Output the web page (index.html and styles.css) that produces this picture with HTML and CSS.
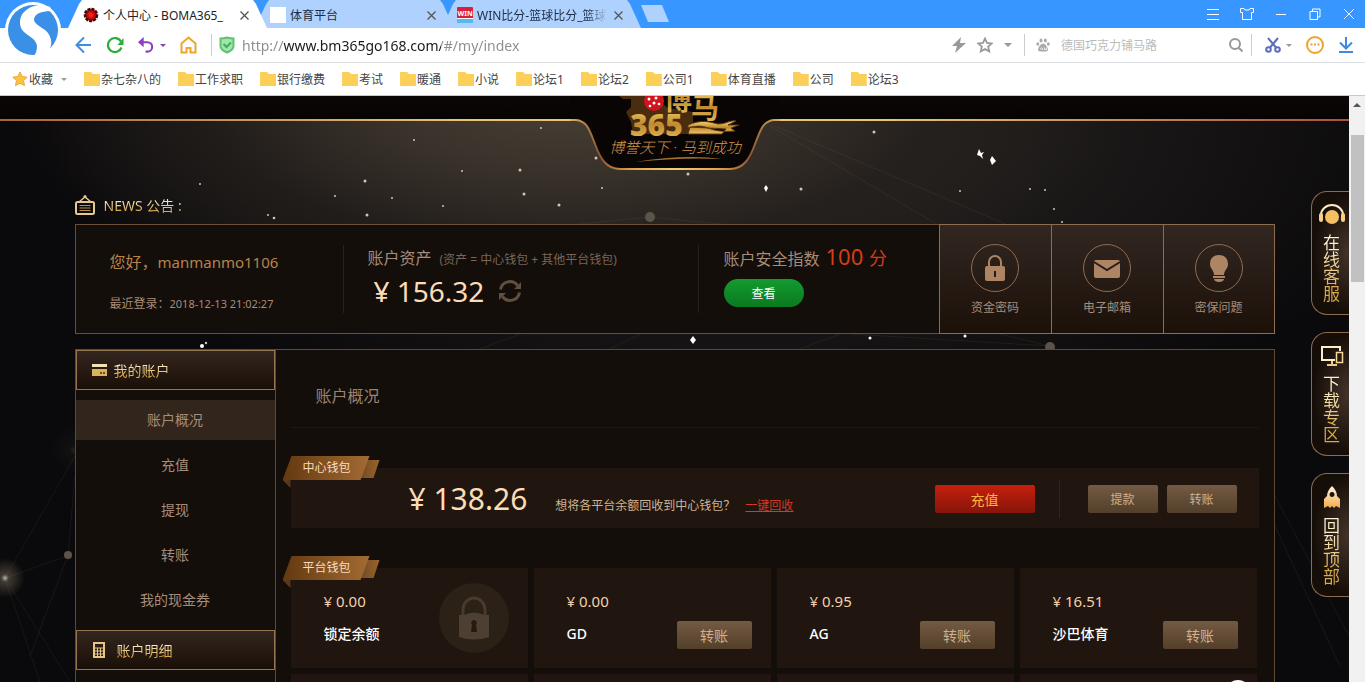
FILE: index.html
```
<!DOCTYPE html>
<html lang="zh-CN">
<head>
  <meta charset="UTF-8">
  <title>个人中心 - BOMA365</title>
  <link rel="stylesheet" href="styles.css">
</head>
<body>

<header class="browser">
  <svg class="browser-logo" width="60" height="58" viewBox="3 0 60 58">
    <circle cx="33" cy="30" r="28" fill="#fff"/>
    <circle cx="33" cy="30" r="25" fill="#3a8fe6"/>
    <path d="M50 7C38 2 21 8 20 21C19 36 36 35 37 46C37 50 36 53 34 56L46 54C50 51 52 45 51 40C49 27 34 27 34 19C35 13 43 11 52 11Z" fill="#fff"/>
  </svg>

  <div class="tabs">
    <div class="tab active">
      <svg width="16" height="16" viewBox="0 0 16 16"><circle cx="8" cy="8" r="6" fill="#c00808" stroke="#3a0a08" stroke-width="2.500" stroke-dasharray="3 1"/><path d="M5 6l3-1 3 3-2 3-3-1z" fill="#f02020"/></svg>
      <span>个人中心 - BOMA365_</span>
      <button class="close" aria-label="关闭"><svg width="9" height="9" viewBox="0 0 9 9"><path d="M.5.500l8 8M8.500.500l-8 8"/></svg></button>
    </div>
    <div class="tab">
      <svg width="16" height="16" viewBox="0 0 16 16"><path d="M0 0h16v16H0z" fill="#fff"/></svg>
      <span>体育平台</span>
      <button class="close" aria-label="关闭"><svg width="9" height="9" viewBox="0 0 9 9"><path d="M.5.500l8 8M8.500.500l-8 8"/></svg></button>
    </div>
    <div class="tab">
      <svg width="16" height="16" viewBox="0 0 16 16"><rect width="16" height="16" rx="1" fill="#d8203c"/><path d="M0 12h16v4H0z" fill="#58b8f0"/><path d="M0 11h16v1H0z" fill="#fff"/><text x="8" y="9" text-anchor="middle" class="win">WIN</text></svg>
      <span class="faded">WIN比分-篮球比分_篮球</span>
      <button class="close" aria-label="关闭"><svg width="9" height="9" viewBox="0 0 9 9"><path d="M.5.500l8 8M8.500.500l-8 8"/></svg></button>
    </div>
    <button class="new-tab" aria-label="新标签"></button>
    <div class="window-buttons">
      <button aria-label="菜单"><svg width="14" height="14" viewBox="0 0 14 14"><path d="M1 2.500h12M1 7.500h12M1 12.500h12"/></svg></button>
      <button aria-label="皮肤"><svg width="14" height="14" viewBox="0 0 14 14"><path d="M.5 1.500h3.500l1 1.500h4l1-1.500h3.500v4h-2v7h-9v-7h-2z"/></svg></button>
      <button aria-label="最小化"><svg width="14" height="14" viewBox="0 0 14 14"><path d="M2 7.500h10"/></svg></button>
      <button aria-label="还原"><svg width="14" height="14" viewBox="0 0 14 14"><path d="M2 4.500h7.500v8H2zM4.500 4.500v-2.500h7.500v8h-2.500"/></svg></button>
      <button aria-label="关闭窗口"><svg width="14" height="14" viewBox="0 0 14 14"><path d="M2 2l10 10M12 2l-10 10"/></svg></button>
    </div>
  </div>

  <div class="toolbar">
    <nav class="nav">
      <button aria-label="后退"><svg width="17" height="18" viewBox="0 0 17 18"><path d="M16 9H2M9 1.500L1.500 9L9 16.500" fill="none" stroke="#3f8ee0" stroke-width="2"/></svg></button>
      <button aria-label="刷新"><svg width="18" height="18" viewBox="0 0 18 18"><path d="M15.500 11.500A7 7 0 1 1 15 5.500" fill="none" stroke="#2bad3c" stroke-width="2.200"/><path d="M17.500 2v7h-6z" fill="#2bad3c"/></svg></button>
      <span class="undo">
        <button aria-label="撤销"><svg width="17" height="18" viewBox="0 0 18 18"><path d="M3 6h7a5 5 0 0 1 0 10H8" fill="none" stroke="#8a3fc4" stroke-width="2.200"/><path d="M0 6l6-5.500v11z" fill="#8a3fc4"/></svg></button>
        <i class="caret violet"></i>
      </span>
      <button aria-label="主页"><svg width="17" height="18" viewBox="0 0 17 18"><path d="M1.500 16.500V7.500L8.500 1.500L15.500 7.500v9h-5v-4.500h-4v4.500z" fill="none" stroke="#eda62a" stroke-width="2"/></svg></button>
    </nav>
    <i class="sep"></i>
    <svg class="shield" width="16" height="18" viewBox="0 0 16 18"><path d="M1.500 2.500Q5 2.500 8 1.500Q11 2.500 14.500 2.500V10Q14.500 14 8 16.500Q1.500 14 1.500 10z" fill="#a5e3b0" stroke="#5cc46e" stroke-width="2"/><path d="M4.500 8l3 3 4.500-4.500" fill="none" stroke="#3fae55" stroke-width="2"/></svg>
    <input class="url" type="text" aria-label="地址" value="http://www.bm365go168.com/#/my/index">
    <div class="url-tools">
      <svg width="14" height="16" viewBox="0 0 14 16"><path d="M9 0L0 9h5l-2 7 11-10H8z" fill="#999"/></svg>
      <svg width="16" height="16" viewBox="0 0 16 16"><path d="M8 1.500l2 4.400 4.700.5-3.500 3.200 1 4.800L8 12l-4.200 2.400 1-4.800L1.300 6.400 6 5.900z" fill="none" stroke="#999" stroke-width="1.800"/></svg>
      <i class="caret"></i>
    </div>
    <div class="search">
      <svg width="14" height="14" viewBox="0 0 14 14" fill="#aaa"><ellipse cx="5" cy="2.500" rx="1.500" ry="2"/><ellipse cx="9.300" cy="2.500" rx="1.500" ry="2"/><ellipse cx="1.800" cy="6" rx="1.500" ry="1.800"/><ellipse cx="12.300" cy="6" rx="1.500" ry="1.800"/><path d="M7 5.500c2 0 5 4 5 6s-2 2-5 2-5 0-5-2 3-6 5-6z"/><path d="M4.500 11.500a1 1 0 1 1 2-1v1.500M8.500 9.500v2h2v-2" fill="none" stroke="#fff" stroke-width=".8"/></svg>
      <input type="text" aria-label="搜索" placeholder="德国巧克力铺马路">
      <button aria-label="搜索"><svg width="16" height="16" viewBox="0 0 16 16"><circle cx="7" cy="7" r="5" fill="none" stroke="#999" stroke-width="2"/><path d="M10.500 10.500l4 4" stroke="#999" stroke-width="2"/></svg></button>
    </div>
    <div class="extras">
      <span class="undo">
        <svg width="16" height="18" viewBox="0 0 16 18" fill="none" stroke="#5b6db8" stroke-width="2"><path d="M3 2l8 9.500M13 2l-8 9.500"/><circle cx="3.500" cy="13.500" r="2.300"/><circle cx="12.500" cy="13.500" r="2.300"/></svg>
        <i class="caret"></i>
      </span>
      <svg width="18" height="18" viewBox="0 0 18 18"><circle cx="9" cy="9" r="8" fill="none" stroke="#eba52f" stroke-width="2"/><path d="M4.500 8.500h2M8 8.500h2M11.500 8.500h2" stroke="#eba52f" stroke-width="2"/></svg>
      <svg width="16" height="18" viewBox="0 0 16 18" fill="none" stroke="#3d8ae0" stroke-width="2"><path d="M8 1v11M2 6.500l6 6 6-6M1 16h14"/></svg>
    </div>
  </div>

  <nav class="bookmarks">
    <a href="#" class="fav"><svg width="16" height="16" viewBox="0 0 16 16"><path d="M8 1l2.200 4.600 5 .6-3.700 3.400 1 5L8 12.200l-4.500 2.400 1-5L.8 6.200l5-.6z" fill="#fbc440" stroke="#e9a93a"/></svg>收藏<i class="caret"></i></a>
    <a href="#" class="folder">杂七杂八的</a>
    <a href="#" class="folder">工作求职</a>
    <a href="#" class="folder">银行缴费</a>
    <a href="#" class="folder">考试</a>
    <a href="#" class="folder">暖通</a>
    <a href="#" class="folder">小说</a>
    <a href="#" class="folder">论坛1</a>
    <a href="#" class="folder">论坛2</a>
    <a href="#" class="folder">公司1</a>
    <a href="#" class="folder">体育直播</a>
    <a href="#" class="folder">公司</a>
    <a href="#" class="folder">论坛3</a>
  </nav>
</header>

<div class="viewport">
  <div class="page">

    <!-- night sky behind the panels -->
    <svg class="sky" viewBox="0 0 1349 586" preserveAspectRatio="xMidYMin slice">
      <defs>
        <radialGradient id="flare"><stop offset="0" stop-color="#fff" stop-opacity=".7"/><stop offset=".2" stop-color="#b8a98f" stop-opacity=".3"/><stop offset="1" stop-color="#b8a98f" stop-opacity="0"/></radialGradient>
      </defs>
      <g stroke="#8a7a66" stroke-opacity=".12" fill="none">
        <path d="M770 30L940 130M775 30L1010 130M5 482L70 459M5 482L75 360M5 482L40 586M5 482L70 586M68 459L30 560M68 459L75 380"/>
        <path d="M560 130L650 121L740 130M480 253L520 238M610 253L640 238M800 253L840 238M850 238L1050 250M1000 238L1050 250M1275 400L1349 540M1275 430L1340 570"/>
      </g>
      <circle cx="5" cy="482" r="20" fill="url(#flare)"/>
      <circle cx="74" cy="354" r="24" fill="url(#flare)" opacity=".15"/>
      <g fill="#5c5449"><circle cx="650" cy="121" r="5"/><circle cx="68" cy="459" r="4"/><circle cx="1050" cy="251" r="5"/></g>
      <g fill="#cfc6b8">
        <circle cx="365" cy="85" r="1.500"/><circle cx="520" cy="74" r="1.500"/><circle cx="524" cy="98" r="1.500"/><circle cx="559" cy="109" r="1.500"/><circle cx="392" cy="102" r="1"/><circle cx="335" cy="100" r="1"/><circle cx="268" cy="119" r="1"/><circle cx="274" cy="122" r="1.300"/><circle cx="367" cy="119" r="1.500"/><circle cx="596" cy="62" r="1.500"/><circle cx="688" cy="78" r="1.500"/><circle cx="801" cy="93" r="1.500"/><circle cx="414" cy="44" r="1"/><circle cx="541" cy="32" r="1"/><circle cx="462" cy="75" r="1"/><circle cx="602" cy="92" r="1"/><circle cx="443" cy="110" r="1"/><circle cx="874" cy="36" r="1.500"/><circle cx="960" cy="95" r="1"/><circle cx="1030" cy="93" r="1"/><circle cx="1045" cy="94" r="1"/><circle cx="1062" cy="126" r="1"/><circle cx="1054" cy="113" r="1"/><circle cx="200" cy="88" r="1"/><circle cx="206" cy="247" r="1.200"/>
      </g>
      <g fill="#fff">
        <path d="M979 53l2 4 3-1-2 3 1 4-3-3-3-1zM992 60l4 5-4 4-2-5zM693 240l3 4-3 4-3-4zM766 89l2 3-2 4-2-4z"/>
        <circle cx="202" cy="250" r="2"/><circle cx="870" cy="242" r="1.500"/><circle cx="965" cy="240" r="1.500"/>
      </g>
    </svg>

    <div class="page-top">
      <svg class="site-logo" width="210" height="76" viewBox="0 0 210 76">
        <defs>
          <linearGradient id="rim" x1="0" x2="1" y1="0" y2="0"><stop offset="0" stop-color="#d9b266"/><stop offset=".14" stop-color="#8c5632"/><stop offset=".3" stop-color="#e3a64c"/><stop offset=".5" stop-color="#f0d070"/><stop offset=".7" stop-color="#e3a64c"/><stop offset=".86" stop-color="#8c5632"/><stop offset="1" stop-color="#d9b266"/></linearGradient>
          <linearGradient id="gold" x1="0" x2="0" y1="0" y2="1"><stop offset="0" stop-color="#f6dd74"/><stop offset=".5" stop-color="#c28a2e"/><stop offset="1" stop-color="#eec464"/></linearGradient>
        </defs>
        <path d="M0 0H210V24H204C192 25 190 36 185 48C180 62 174 73 160 73H50C36 73 30 62 25 48C20 36 18 25 6 24H0z" fill="#090504"/>
        <path d="M0 24H6C18 25 20 36 25 48C30 62 36 73 50 73H160C174 73 180 62 185 48C190 36 192 25 204 24H210" fill="none" stroke="url(#rim)" stroke-width="2"/>
        <path d="M49 0l4 3h8v8l-5 5 5 10 2 12h60V16l-25-4-18-14z" fill="#4a2c10"/>
        <text x="94" y="14" class="logo-name" fill="url(#gold)">博</text>
        <text x="121" y="22" class="logo-name" fill="url(#gold)">马</text>
        <text x="60" y="40" class="logo-number" fill="url(#gold)">365</text>
        <path d="M118 38h34l4-5-36-2zM118 29c14-6 22-3 30-1 8 0 12-4 18-3l-8 4h11l-8 3 4 3c-10 1-18 0-24-2-8-3-12-4-23-1z" fill="url(#gold)" stroke="#5a3612"/>
        <circle cx="84" cy="5" r="10" fill="#cf1420"/>
        <g fill="#fff"><circle cx="79" cy="3" r="1.500"/><circle cx="86" cy="2" r="1.500"/><circle cx="84" cy="7" r="1.500"/><circle cx="89" cy="8" r="1.300"/><circle cx="80" cy="10" r="1.300"/></g>
        <path d="M65 66Q115 58 152 63Q112 61 65 66z" fill="#a5732e"/>
        <text x="105" y="57" text-anchor="middle" class="slogan">博誉天下 · 马到成功</text>
      </svg>
    </div>

    <main class="container">
      <div class="news">
        <svg width="20" height="20" viewBox="0 0 20 20" fill="none" stroke="#e8c88c"><path d="M4 7l6-5 6 5" stroke-width="1.500"/><circle cx="10" cy="1.500" r="1.500" fill="#e8c88c" stroke="none"/><rect x="1" y="7" width="18" height="12" rx="1.500" stroke-width="2"/><path d="M4.500 10.500h11M4.500 13h11M4.500 15.500h11" stroke="#b8904e"/></svg>
        <span class="gold-text">NEWS 公告 :</span>
      </div>

      <section class="user-box">
        <div class="user-hello">
          <p class="hello">您好，<span>manmanmo1106</span></p>
          <p class="last-login">最近登录：<span>2018-12-13 21:02:27</span></p>
        </div>
        <div class="assets">
          <p class="label">账户资产 <small>(资产 = 中心钱包 + 其他平台钱包)</small></p>
          <p class="amount">¥ 156.32
            <button class="refresh" aria-label="刷新余额"><svg width="24" height="24" viewBox="0 0 24 24" fill="none" stroke="#61503f" stroke-width="3"><path d="M2.500 10.500A9.500 9.500 0 0 1 19.500 6.500M21.500 13.500A9.500 9.500 0 0 1 4.500 17.500"/><path d="M23 3v7h-7zM1 21v-7h7z" fill="#61503f" stroke="none"/></svg></button>
          </p>
        </div>
        <div class="safety">
          <p class="label">账户安全指数 <span class="score">100 <span>分</span></span></p>
          <button class="check">查看</button>
        </div>
        <a href="#" class="tile">
          <svg width="48" height="48" viewBox="0 0 48 48"><circle cx="24" cy="24" r="23.500" fill="none" stroke="#8d6c52"/><path d="M18 23v-5a6 6 0 0 1 12 0v5" fill="none" stroke="#ad8565" stroke-width="2"/><rect x="14" y="22" width="20" height="15" rx="2" fill="#ad8565"/><path d="M23 27h2v6h-2z" fill="#241914"/></svg>
          资金密码
        </a>
        <a href="#" class="tile">
          <svg width="48" height="48" viewBox="0 0 48 48"><circle cx="24" cy="24" r="23.500" fill="none" stroke="#8d6c52"/><rect x="11" y="16" width="26" height="18" rx="2" fill="#ad8565"/><path d="M11 18l13 8 13-8" fill="none" stroke="#2a1d17" stroke-width="2"/></svg>
          电子邮箱
        </a>
        <a href="#" class="tile">
          <svg width="48" height="48" viewBox="0 0 48 48"><circle cx="24" cy="24" r="23.500" fill="none" stroke="#8d6c52"/><path d="M24 11c5 0 9 3 9 9 0 5-4 6-4 11H19c0-5-4-6-4-11 0-6 4-9 9-9zM18 32h12v2H18zM19 35h10c0 4-10 4-10 0z" fill="#ad8565"/></svg>
          密保问题
        </a>
      </section>

      <div class="panel">
        <aside class="sidebar">
          <h3><svg width="16" height="12" viewBox="0 0 16 12"><path d="M0 0h15v3H0z" fill="#f3e2b4"/><path d="M0 5h15v7H0z" fill="#d9b35c"/><path d="M8 8h2v2H8zM11 8h2v2h-2z" fill="#6d4f20"/></svg><span class="gold-text">我的账户</span></h3>
          <ul>
            <li class="current"><a href="#">账户概况</a></li>
            <li><a href="#">充值</a></li>
            <li><a href="#">提现</a></li>
            <li><a href="#">转账</a></li>
            <li><a href="#">我的现金券</a></li>
          </ul>
          <h3><svg width="19" height="16" viewBox="0 0 19 16"><rect x="2" y="1" width="10" height="14" fill="none" stroke="#e6c682" stroke-width="2"/><path d="M3 6h8M3 9h8M3 12h8M5.500 6v8M8.500 6v8" stroke="#e6c682"/></svg><span class="gold-text">账户明细</span></h3>
        </aside>

        <div class="content">
          <h2>账户概况</h2>

          <section class="center-wallet">
            <div class="ribbon"><span>中心钱包</span></div>
            <p class="balance"><strong>¥ 138.26</strong>想将各平台余额回收到中心钱包？<a href="#">一键回收</a></p>
            <button class="btn red">充值</button>
            <div class="transfer">
              <button class="btn">提款</button>
              <button class="btn">转账</button>
            </div>
          </section>

          <section class="wallets">
            <div class="ribbon"><span>平台钱包</span></div>
            <div class="card">
              <div><p>¥ 0.00</p><h4>锁定余额</h4></div>
              <svg class="locked" width="70" height="70" viewBox="0 0 70 70"><circle cx="35" cy="35" r="35" fill="#2b2117"/><path d="M24 36V27a11 12 0 0 1 22 0v9" fill="none" stroke="#483a2d" stroke-width="3"/><path d="M20 32h5q10-5 20 0h5v22q-15 5-30 0z" fill="#4d3f31"/><path d="M35 37a3 3 0 0 1 2 5l1 7h-6l1-7a3 3 0 0 1 2-5z" fill="#241b13"/></svg>
            </div>
            <div class="card">
              <div><p>¥ 0.00</p><h4>GD</h4></div>
              <button class="btn">转账</button>
            </div>
            <div class="card">
              <div><p>¥ 0.95</p><h4>AG</h4></div>
              <button class="btn">转账</button>
            </div>
            <div class="card">
              <div><p>¥ 16.51</p><h4>沙巴体育</h4></div>
              <button class="btn">转账</button>
            </div>
            <div class="card next"></div>
            <div class="card next"></div>
            <div class="card next"></div>
            <div class="card next"></div>
          </section>
        </div>
      </div>
    </main>

    <div class="float-bar">
      <a href="#">
        <svg width="28" height="22" viewBox="0 0 28 22"><circle cx="14" cy="13" r="7" fill="#f6bf63"/><path d="M3 13V11a11 10 0 0 1 22 0v2" fill="none" stroke="#fdebc8" stroke-width="2"/><rect x="1" y="9" width="4" height="9" rx="2" fill="#f9cf85"/><rect x="23" y="9" width="4" height="9" rx="2" fill="#f9cf85"/></svg>
        <span class="gold-text">在线客服</span>
      </a>
      <a href="#">
        <svg width="24" height="22" viewBox="0 0 24 22" fill="none"><path d="M15 15H2V2h18v4" stroke="#fbeccb" stroke-width="2"/><path d="M7 20h10M12 16v4" stroke="#f3c987" stroke-width="2"/><rect x="16.500" y="7.500" width="6" height="10" stroke="#f6d79c" stroke-width="1.500"/></svg>
        <span class="gold-text">下载专区</span>
      </a>
      <a href="#">
        <svg width="18" height="24" viewBox="0 0 18 24"><defs><linearGradient id="fire" x1="0" x2="0" y1="0" y2="1"><stop offset="0" stop-color="#fff6e0"/><stop offset="1" stop-color="#f2ac48"/></linearGradient></defs><path d="M9 1c3 3 5 6 5 10l3 3v9l-4-2-2 2-2-2-2 2-2-2-4 2v-9l3-3c0-4 2-7 5-10zM9 7a2.500 2.500 0 1 0 .1 0z" fill="url(#fire)" fill-rule="evenodd"/></svg>
        <span class="gold-text">回到顶部</span>
      </a>
    </div>

    <i class="bubble"></i>
  </div>

  <div class="scrollbar"><i class="up"></i><i class="thumb"></i></div>
</div>

</body>
</html>
```

FILE: styles.css
```
* {
  box-sizing: border-box;
}

body {
  margin: 0;
  height: 100vh;
  display: flex;
  flex-direction: column;
  overflow: hidden;
  font-family: "Noto Sans", "Noto Sans CJK SC", sans-serif;
  font-size: 12px;
  background: #0a090b;
}

p, h2, h3, h4, ul {
  margin: 0;
  padding: 0;
  font-weight: normal;
}

ul {
  list-style: none;
}

a {
  color: inherit;
  text-decoration: none;
}

button {
  margin: 0;
  padding: 0;
  border: none;
  background: none;
  font-family: inherit;
  cursor: pointer;
}

input {
  border: none;
  outline: none;
  padding: 0;
  background: none;
  font-family: inherit;
  min-width: 0;
}

svg {
  display: block;
  flex-shrink: 0;
}

/* ---------- browser bars ---------- */

.browser {
  position: relative;
  flex-shrink: 0;
  background: #fff;
  border-bottom: 1px solid #c8c8c8;
}

.browser-logo {
  position: absolute;
  left: 3px;
  top: 0;
  z-index: 3;
}

.tabs {
  display: flex;
  height: 28px;
  padding-left: 68px;
  background: #3796ff;
}

.tab {
  display: flex;
  align-items: center;
  width: 199px;
  padding: 2px 18px 0 15px;
  background: #aed1fd;
  color: #1c2c44;
  clip-path: polygon(0 100%, 11px 4px, 14px 0, 185px 0, 188px 4px, 100% 100%);
}

.tab + .tab {
  margin-left: -12px;
}

.tab.active {
  position: relative;
  z-index: 2;
  background: #fff;
  color: #222;
}

.tab span {
  flex: 1;
  margin: 0 7px 0 4px;
  overflow: hidden;
  white-space: nowrap;
}

.tab .faded {
  -webkit-mask-image: linear-gradient(to right, #000 85%, transparent);
}

.close svg {
  fill: none;
  stroke: #555;
  stroke-width: 1.3;
}

.win {
  font-size: 7px;
  font-weight: bold;
  fill: #fff;
}

.new-tab {
  width: 28px;
  height: 17px;
  margin-top: 5px;
  background: #aed1fd;
  clip-path: polygon(0 0, 21px 0, 100% 100%, 7px 100%);
}

.window-buttons {
  display: flex;
  align-items: center;
  gap: 20px;
  margin-left: auto;
  padding-right: 9px;
}

.window-buttons svg {
  fill: none;
  stroke: #fff;
}

.toolbar {
  display: flex;
  align-items: center;
  height: 35px;
  padding: 0 11px 0 75px;
  border-bottom: 1px solid #dcdfe3;
}

.nav {
  display: flex;
  gap: 14px;
}

.undo {
  display: flex;
  align-items: center;
  gap: 5px;
}

.caret {
  border: 4px solid transparent;
  border-top-color: #999;
  border-bottom: none;
}

.caret.violet {
  border-width: 3px;
  border-top-color: #8a3fc4;
  border-bottom: none;
}

.sep {
  width: 1px;
  height: 22px;
  margin: 0 7px 0 14px;
  background: #ccc;
}

.url {
  flex: 1;
  margin-left: 7px;
  height: 26px;
  font-size: 14px;
  /* host name darker than the rest of the address */
  background: linear-gradient(to right, #8c8c8c 41px, #1a1a1a 41px, #1a1a1a 199px, #8c8c8c 199px);
  -webkit-background-clip: text;
  background-clip: text;
  color: transparent;
}

.url-tools {
  display: flex;
  align-items: center;
  gap: 11px;
  padding-right: 12px;
}

.search {
  display: flex;
  align-items: center;
  width: 228px;
  height: 22px;
  padding: 0 7px 0 11px;
  border-left: 1px solid #ccc;
  border-right: 1px solid #ccc;
}

.search input {
  flex: 1;
  margin-left: 11px;
  font-size: 12px;
}

.search input::placeholder {
  color: #bbb;
}

.extras {
  display: flex;
  align-items: center;
  gap: 14px;
  padding-left: 13px;
}

.extras .caret {
  border-width: 3px;
  border-bottom: none;
}

.bookmarks {
  display: flex;
  align-items: center;
  gap: 17px;
  height: 32px;
  padding-left: 12px;
  color: #444;
}

.bookmarks a {
  display: flex;
  align-items: center;
  white-space: nowrap;
}

.bookmarks .fav {
  gap: 1px;
}

.fav .caret {
  margin-left: 7px;
  border-width: 3px;
  border-bottom: none;
}

.folder::before {
  content: "";
  width: 16px;
  height: 14px;
  margin-right: 1px;
  background: #fbcf58;
  clip-path: polygon(0 0, 7px 0, 9px 2px, 100% 2px, 100% 100%, 0 100%);
}

/* ---------- site ---------- */

.viewport {
  flex: 1;
  min-height: 0;
  display: flex;
}

.page {
  position: relative;
  flex: 1;
  overflow: hidden;
  background:
    radial-gradient(ellipse 560px 230px at 42% 0, #494136 0, #38312a 35%, rgba(38, 33, 29, .7) 65%, transparent 100%),
    radial-gradient(ellipse 700px 330px at 55% 5%, #2b2724, transparent),
    #0a090b;
}

.sky {
  position: absolute;
  inset: 0;
  width: 100%;
  height: 100%;
}

.page-top {
  position: relative;
  height: 25px;
  background:
    linear-gradient(to right, #a8623c, #e6c673 35%, #e6c673 65%, #a8523c) bottom / 100% 2px no-repeat,
    linear-gradient(#0c0706, #060303);
}

.site-logo {
  position: absolute;
  left: 50%;
  top: 0;
  margin-left: -105px;
}

.logo-name {
  font-size: 28px;
  font-weight: 700;
}

.logo-number {
  font-size: 30px;
  font-weight: 900;
}

.slogan {
  font-size: 15px;
  font-style: italic;
  font-weight: 300;
  fill: #d0954c;
}

.container {
  position: relative;
  max-width: 1200px;
  margin: 0 auto;
}

.gold-text {
  background: linear-gradient(#fff3cf 20%, #d9a94a 80%);
  -webkit-background-clip: text;
  background-clip: text;
  color: transparent;
}

.news {
  display: flex;
  align-items: center;
  gap: 9px;
  height: 33px;
  margin-top: 70px;
  padding-bottom: 6px;
  font-size: 14px;
}

.user-box {
  display: flex;
  align-items: flex-start;
  height: 110px;
  border: 1px solid #6b4e35;
  background: #130e0a;
  color: #a68c7a;
}

.user-hello, .assets, .safety {
  height: 68px;
  margin-top: 20px;
}

.user-hello {
  width: 268px;
  padding: 5px 0 0 34px;
  border-right: 1px solid #2b2119;
}

.hello {
  font-size: 16px;
  line-height: 24px;
  color: #b8834a;
}

.hello span {
  font-size: 15px;
}

.last-login {
  margin-top: 20px;
  line-height: 20px;
}

.last-login span {
  font-size: 11px;
}

.assets {
  width: 355px;
  padding-left: 24px;
  border-right: 1px solid #2b2119;
}

.label {
  display: flex;
  align-items: baseline;
  gap: 8px;
  height: 26px;
  font-size: 16px;
  line-height: 26px;
  white-space: nowrap;
}

.label small {
  font-size: 12px;
  color: #7a6556;
}

.amount {
  display: flex;
  align-items: center;
  gap: 14px;
  padding-left: 6px;
  font-size: 28px;
  line-height: 40px;
  color: #fbdcb9;
}

.safety {
  flex: 1;
  padding-left: 25px;
}

.safety .label {
  gap: 6px;
  line-height: 22px;
}

.score {
  font-size: 22px;
  color: #d63c1c;
}

.score span {
  font-size: 18px;
}

.check {
  width: 80px;
  height: 28px;
  margin-top: 8px;
  border-radius: 14px;
  background: linear-gradient(#149a30, #0b7a20);
  color: #fff;
  font-size: 12px;
}

.tile {
  display: flex;
  flex-direction: column;
  flex-shrink: 0;
  align-items: center;
  gap: 6px;
  width: 112px;
  height: 110px;
  margin-top: -1px;
  padding-top: 19px;
  border: 1px solid #8d6c4f;
  border-right: none;
  background: linear-gradient(#322621, #1c1109);
  line-height: 20px;
}

.tile:last-child {
  margin-right: -1px;
  border-right: 1px solid #8d6c4f;
}

.panel {
  display: flex;
  height: 700px;
  margin-top: 15px;
  border: 1px solid #5f4932;
  background: #130e0a;
}

.sidebar {
  width: 200px;
  border-right: 1px solid #5f4932;
  color: #a68c7a;
  font-size: 14px;
}

.sidebar h3 {
  display: flex;
  align-items: center;
  gap: 6px;
  height: 40px;
  padding-left: 15px;
  border: 1px solid #96744f;
  background: linear-gradient(#33261f, #1a0f07);
  font-size: 14px;
}

.sidebar ul {
  padding: 10px 0 5px;
}

.sidebar li {
  height: 40px;
  margin-bottom: 5px;
  line-height: 40px;
  text-align: center;
}

.sidebar li a {
  display: block;
}

.sidebar .current {
  background: #32251b;
}

.content {
  flex: 1;
  padding: 0 15px;
}

.content h2 {
  padding: 32px 25px 17px;
  border-bottom: 1px solid #1f1712;
  font-size: 16px;
  line-height: 28px;
  color: #9c8371;
}

.center-wallet {
  position: relative;
  display: flex;
  align-items: center;
  height: 60px;
  margin-top: 40px;
  padding: 1px 22px 0 118px;
  background: #20160f;
}

.ribbon {
  position: absolute;
  left: -8px;
  top: -12px;
  width: 97px;
  height: 32px;
}

/* tail behind, folded corner below, body on top */
.ribbon::before {
  content: "";
  position: absolute;
  right: 0;
  top: 4px;
  width: 24px;
  height: 18px;
  background: linear-gradient(to right, #6b431d, #9a652f);
  clip-path: polygon(0 0, 100% 0, 18px 100%, 0 100%);
}

.ribbon::after {
  content: "";
  position: absolute;
  left: 0;
  top: 24px;
  width: 8px;
  height: 8px;
  background: #5a3818;
  clip-path: polygon(0 0, 100% 0, 100% 100%);
}

.ribbon span {
  position: relative;
  display: block;
  width: 87px;
  height: 24px;
  padding-left: 20px;
  background: linear-gradient(to right, #63390f, #a36b34);
  clip-path: polygon(9px 0, 100% 0, 78px 100%, 0 100%);
  color: #fbdcb9;
  line-height: 24px;
}

.balance {
  flex: 1;
  color: #cdb496;
  white-space: nowrap;
}

.balance strong {
  margin-right: 28px;
  font-size: 30px;
  font-weight: normal;
  color: #fbdcb9;
}

.balance a {
  margin-left: 10px;
  color: #d03a2a;
  text-decoration: underline;
}

.btn {
  width: 70px;
  height: 28px;
  border-radius: 2px;
  background: linear-gradient(#735a43, #533f2a);
  color: #d0b08e;
  font-size: 12px;
}

.btn.red {
  width: 100px;
  background: linear-gradient(#c6200e, #861409);
  color: #fbb545;
  font-size: 14px;
}

.transfer {
  display: flex;
  gap: 9px;
  margin-left: 24px;
  padding: 5px 0 5px 28px;
  border-left: 1px solid #30241b;
}

.wallets {
  position: relative;
  display: grid;
  grid-template-columns: repeat(4, 1fr);
  gap: 6px;
  margin: 40px 2px 0 0;
}

.card {
  display: flex;
  justify-content: space-between;
  align-items: flex-end;
  height: 100px;
  padding: 0 19px 19px 33px;
  background: #20160f;
}

.card.next {
  background: #211411;
}

.card div {
  align-self: flex-start;
  padding-top: 22px;
}

.card p {
  font-size: 15px;
  line-height: 22px;
  color: #f3d1ae;
}

.card h4 {
  margin-top: 11px;
  font-size: 14px;
  font-weight: 500;
  line-height: 22px;
  color: #fff;
}

.card .btn {
  width: 75px;
  font-size: 14px;
}

.card .locked {
  align-self: center;
  margin-top: 19px;
}

/* ---------- right edge ---------- */

.float-bar {
  position: absolute;
  right: 0;
  top: 95px;
  display: flex;
  flex-direction: column;
  gap: 17px;
}

.float-bar a {
  display: flex;
  flex-direction: column;
  align-items: center;
  justify-content: center;
  gap: 8px;
  width: 38px;
  height: 124px;
  padding-left: 2px;
  border: 1px solid #8d6c4f;
  border-right: none;
  border-radius: 16px 0 0 16px;
  background: radial-gradient(ellipse 36px 60px at 100% 50%, #43342a, #150d08);
  font-size: 17px;
  line-height: 17px;
}

.float-bar span {
  width: 17px;
}

.bubble {
  position: absolute;
  right: 99px;
  bottom: -20px;
  width: 24px;
  height: 22px;
  border-radius: 50%;
  background: #fff;
}

.scrollbar {
  width: 16px;
  padding-top: 7px;
  background: #f1f1f1;
}

.scrollbar i {
  display: block;
  margin: 0 auto;
}

.scrollbar .up {
  width: 8px;
  border: 4px solid transparent;
  border-top: none;
  border-bottom-color: #555;
}

.scrollbar .thumb {
  width: 13px;
  height: 147px;
  margin-top: 28px;
  background: #c1c1c1;
}
```
